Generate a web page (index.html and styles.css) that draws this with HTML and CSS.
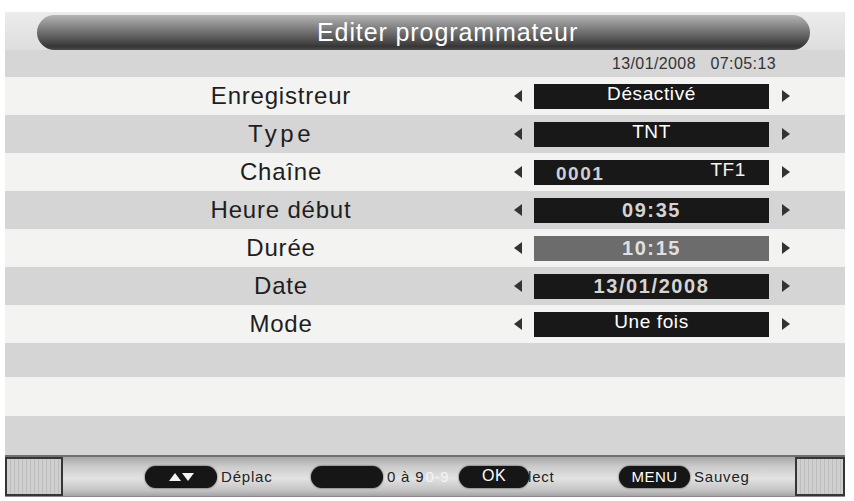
FILE: index.html
```html
<!DOCTYPE html>
<html lang="fr">
<head>
<meta charset="utf-8">
<title>Editer programmateur</title>
<link rel="stylesheet" href="styles.css">
</head>
<body>
<div class="screen">
  <div class="header">
    <div class="title-pill"><span class="title">Editer programmateur</span></div>
  </div>
  <div class="clock">13/01/2008   07:05:13</div>

  <div class="row light">
    <div class="label">Enregistreur</div>
    <div class="value"><span class="arr-l"></span><div class="box">Désactivé</div><span class="arr-r"></span></div>
  </div>
  <div class="row gray">
    <div class="label wide">Type</div>
    <div class="value"><span class="arr-l"></span><div class="box">TNT</div><span class="arr-r"></span></div>
  </div>
  <div class="row light">
    <div class="label">Chaîne</div>
    <div class="value"><span class="arr-l"></span><div class="box split"><span class="num">0001</span><span class="chan">TF1</span></div><span class="arr-r"></span></div>
  </div>
  <div class="row gray">
    <div class="label">Heure début</div>
    <div class="value"><span class="arr-l"></span><div class="box digits">09:35</div><span class="arr-r"></span></div>
  </div>
  <div class="row light">
    <div class="label">Durée</div>
    <div class="value"><span class="arr-l"></span><div class="box digits focus">10:15</div><span class="arr-r"></span></div>
  </div>
  <div class="row gray">
    <div class="label">Date</div>
    <div class="value"><span class="arr-l"></span><div class="box digits">13/01/2008</div><span class="arr-r"></span></div>
  </div>
  <div class="row light">
    <div class="label">Mode</div>
    <div class="value"><span class="arr-l"></span><div class="box">Une fois</div><span class="arr-r"></span></div>
  </div>
  <div class="row gray short"></div>
  <div class="row light tall"></div>
  <div class="row gray tall"></div>

  <div class="footer">
    <div class="sq"></div>
    <div class="key k1"><span class="pill"><span class="up"></span><span class="down"></span></span><span class="kl">Déplac</span></div>
    <div class="key k2"><span class="pill"></span><span class="kl">0 à 9<span class="ghost">0-9</span></span></div>
    <div class="key k3"><span class="pill">OK</span><span class="kl tight">lect</span></div>
    <div class="key k4"><span class="pill">MENU</span><span class="kl">Sauveg</span></div>
    <div class="sq sq-r"></div>
  </div>
</div>
</body>
</html>
```

FILE: styles.css
```css
* { box-sizing: border-box; }
html, body { margin: 0; padding: 0; background: #ffffff; }
body { font-family: "Liberation Sans", Arial, sans-serif; width: 854px; height: 501px; overflow: hidden; }

.screen { margin-left: 5px; width: 840px; padding-top: 12px; }

.header {
  height: 38px;
  padding-top: 3px;
  padding-left: 32px;
  background: linear-gradient(#ececec, #dedede);
}
.title-pill {
  width: 773px;
  height: 35px;
  border-radius: 18px;
  background: linear-gradient(#b4b4b4 0%, #8a8a8a 30%, #5a5a5a 65%, #363636 90%, #4a4a4a 100%);
  padding-left: 280px;
  display: flex;
  align-items: center;
}
.title { color: #ffffff; font-size: 25px; letter-spacing: 0.9px; line-height: 1; }

.clock {
  height: 27px;
  background: #d6d6d6;
  text-align: right;
  padding-right: 69px;
  padding-top: 5px;
  font-size: 16px;
  letter-spacing: 0.4px;
  color: #333;
  white-space: pre;
}

.row { height: 38px; display: flex; align-items: center; }
.row.light { background: #f3f3f1; }
.row.gray { background: #d5d5d5; }
.row.short { height: 34px; }
.row.tall { height: 39px; }

.label {
  width: 420px;
  margin-left: 66px;
  text-align: center;
  font-size: 24px;
  letter-spacing: 0.8px;
  color: #1e1e1e;
}
.label.wide { letter-spacing: 3.5px; }

.value { display: flex; align-items: center; margin-left: 23px; }
.arr-l, .arr-r { width: 0; height: 0; border-top: 6px solid transparent; border-bottom: 6px solid transparent; }
.arr-l { border-right: 8px solid #333; }
.arr-r { border-left: 8px solid #333; margin-left: 13px; }

.box {
  width: 235px;
  height: 25px;
  margin-left: 12px;
  background: #181818;
  color: #ffffff;
  font-size: 19px;
  letter-spacing: 0.6px;
  text-align: center;
  line-height: 20px;
}
.box.digits { color: #d4d4d4; font-weight: bold; font-size: 20px; letter-spacing: 1.6px; line-height: 25px; }
.box.focus { background: #6c6c6c; color: #e0e0e0; }
.box.split { display: flex; justify-content: space-between; padding: 0 23px 0 22px; text-align: left; }
.num { color: #cfcfcf; font-weight: bold; font-size: 19px; letter-spacing: 1.5px; line-height: 28px; }
.chan { color: #f2f2f2; line-height: 19px; }

.footer {
  height: 42px;
  display: flex;
  align-items: center;
  border-top: 2px solid #6e6e6e;
  border-bottom: 1px solid #8a8a8a;
  background: linear-gradient(#a8a8a8 0%, #cccccc 25%, #e2e2e2 55%, #c4c4c4 85%, #a4a4a4 100%);
}
.sq {
  width: 58px;
  height: 100%;
  border: 2px solid #353535;
  background: repeating-linear-gradient(90deg, #cfcfcf 0 3px, #bdbdbd 3px 4px);
}
.sq-r { width: 50px; margin-left: auto; }

.key { display: flex; align-items: center; }
.k1 { margin-left: 82px; width: 166px; }
.k2 { width: 148px; }
.k3 { width: 160px; }
.k4 { width: 176px; }

.pill {
  display: inline-flex;
  align-items: center;
  justify-content: center;
  height: 22px;
  width: 72px;
  border-radius: 11px;
  background: #161616;
  box-shadow: 0 0 2px #222;
  color: #ffffff;
  font-size: 16px;
  letter-spacing: 0.5px;
}
.k3 .pill { width: 70px; padding-bottom: 2px; }
.k4 .pill { width: 71px; font-size: 15px; }
.up, .down { width: 0; height: 0; border-left: 6px solid transparent; border-right: 6px solid transparent; }
.up { border-bottom: 8px solid #f4f4f4; margin-right: 1px; }
.down { border-top: 8px solid #f4f4f4; }

.kl { margin-left: 4px; font-size: 15px; letter-spacing: 0.8px; color: #222; }
.kl.tight { margin-left: -1px; }
.ghost { color: #f4f4f4; margin-left: 1px; }
```
